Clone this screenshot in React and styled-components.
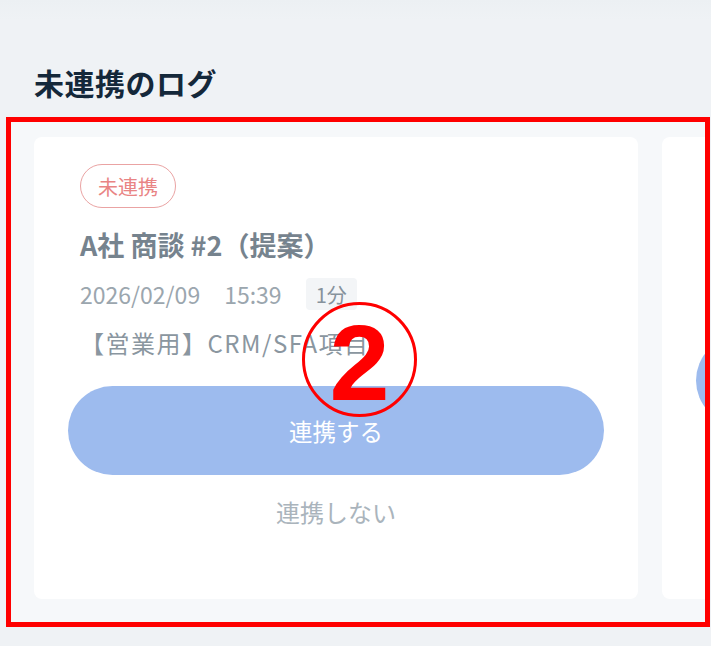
import React from "react";
import styled, { createGlobalStyle } from "styled-components";

const Global = createGlobalStyle`
  html, body { margin: 0; padding: 0; }
  body {
    background: #eef2f5;
    font-family: "Noto Sans CJK JP", "Noto Sans", sans-serif;
  }
`;

const Page = styled.div`
  width: 711px;
  height: 646px;
  overflow: hidden;
  background: linear-gradient(#ecf0f3 0, #eff2f5 20px, #eff2f5 100%);
  display: flex;
  flex-direction: column;
`;

const Heading = styled.h2`
  margin: 0;
  padding: 60px 0 0 34px;
  height: 57px;
  font-size: 30px;
  letter-spacing: 0.5px;
  line-height: 44px;
  font-weight: 700;
  color: #14283a;
`;

const Carousel = styled.div`
  position: relative;
  margin: 0 1px 0 6px;
  height: 510px;
  box-sizing: border-box;
  background: #f6f8fa;
  padding: 20px 0 28px 28px;
  display: flex;
  gap: 24px;
  overflow: hidden;
`;

const Card = styled.div`
  flex-shrink: 0;
  width: 604px;
  box-sizing: border-box;
  background: #ffffff;
  border-radius: 8px;
  padding: 27px 46px 0;
  display: flex;
  flex-direction: column;
  align-items: flex-start;
`;

const Badge = styled.span`
  box-sizing: border-box;
  height: 44px;
  padding: 0 17px;
  border: 1.5px solid #eaa3a3;
  border-radius: 22px;
  color: #e98484;
  font-size: 20px;
  display: inline-flex;
  align-items: center;
`;

const Title = styled.div`
  margin-top: 20px;
  font-size: 27px;
  font-weight: 700;
  color: #76838e;
  line-height: 34px;
`;

const MetaRow = styled.div`
  margin-top: 16px;
  display: flex;
  align-items: center;
  gap: 24px;
  font-size: 23px;
  color: #9ba6ae;
  height: 32px;
`;

const Chip = styled.span`
  background: #f3f5f7;
  border-radius: 4px;
  padding: 0 10px;
  height: 32px;
  display: inline-flex;
  align-items: center;
  color: #86929c;
  font-size: 20px;
`;

const Item = styled.div`
  margin-top: 16px;
  font-size: 24px;
  letter-spacing: 1.5px;
  color: #8a969f;
  line-height: 34px;
  white-space: nowrap;
`;

const Primary = styled.button`
  margin: 26px -12px 0;
  align-self: stretch;
  height: 89px;
  border: none;
  border-radius: 45px;
  background: #9dbbee;
  color: #ffffff;
  font-family: inherit;
  font-size: 23.5px;
  padding: 0;
`;

const Secondary = styled.button`
  margin-top: 20px;
  align-self: center;
  border: none;
  background: none;
  color: #aab4bc;
  font-family: inherit;
  font-size: 24px;
  line-height: 34px;
  padding: 0;
`;

const Frame = styled.div`
  position: absolute;
  inset: 0;
  border: 5px solid #ff0000;
  pointer-events: none;
`;

const Marker = styled.div`
  position: absolute;
  left: 296px;
  top: 185px;
  width: 115px;
  height: 115px;
  box-sizing: border-box;
  border: 3px solid #ff0000;
  border-radius: 50%;
  display: flex;
  align-items: center;
  justify-content: center;
  color: #ff0000;
  font-family: "Liberation Sans", Arial, sans-serif;
  font-weight: 700;
  font-size: 108px;
  line-height: 1;
  padding-top: 6px;
`;

function LogCard({ title, date, time, dur, item }) {
  return (
    <Card>
      <Badge>未連携</Badge>
      <Title>{title}</Title>
      <MetaRow>
        <span>{date}</span>
        <span>{time}</span>
        <Chip>{dur}</Chip>
      </MetaRow>
      {item && <Item>{item}</Item>}
      <Primary>連携する</Primary>
      <Secondary>連携しない</Secondary>
    </Card>
  );
}

export default function App() {
  return (
    <>
      <Global />
      <Page>
        <Heading>未連携のログ</Heading>
        <Carousel>
          <LogCard
            title="A社 商談 #2（提案）"
            date="2026/02/09"
            time="15:39"
            dur="1分"
            item="【営業用】CRM/SFA項目"
          />
          <LogCard
            title="B社 商談 #1"
            date="2026/02/08"
            time="10:12"
            dur="3分"
          />
          <Frame />
          <Marker>2</Marker>
        </Carousel>
      </Page>
    </>
  );
}
